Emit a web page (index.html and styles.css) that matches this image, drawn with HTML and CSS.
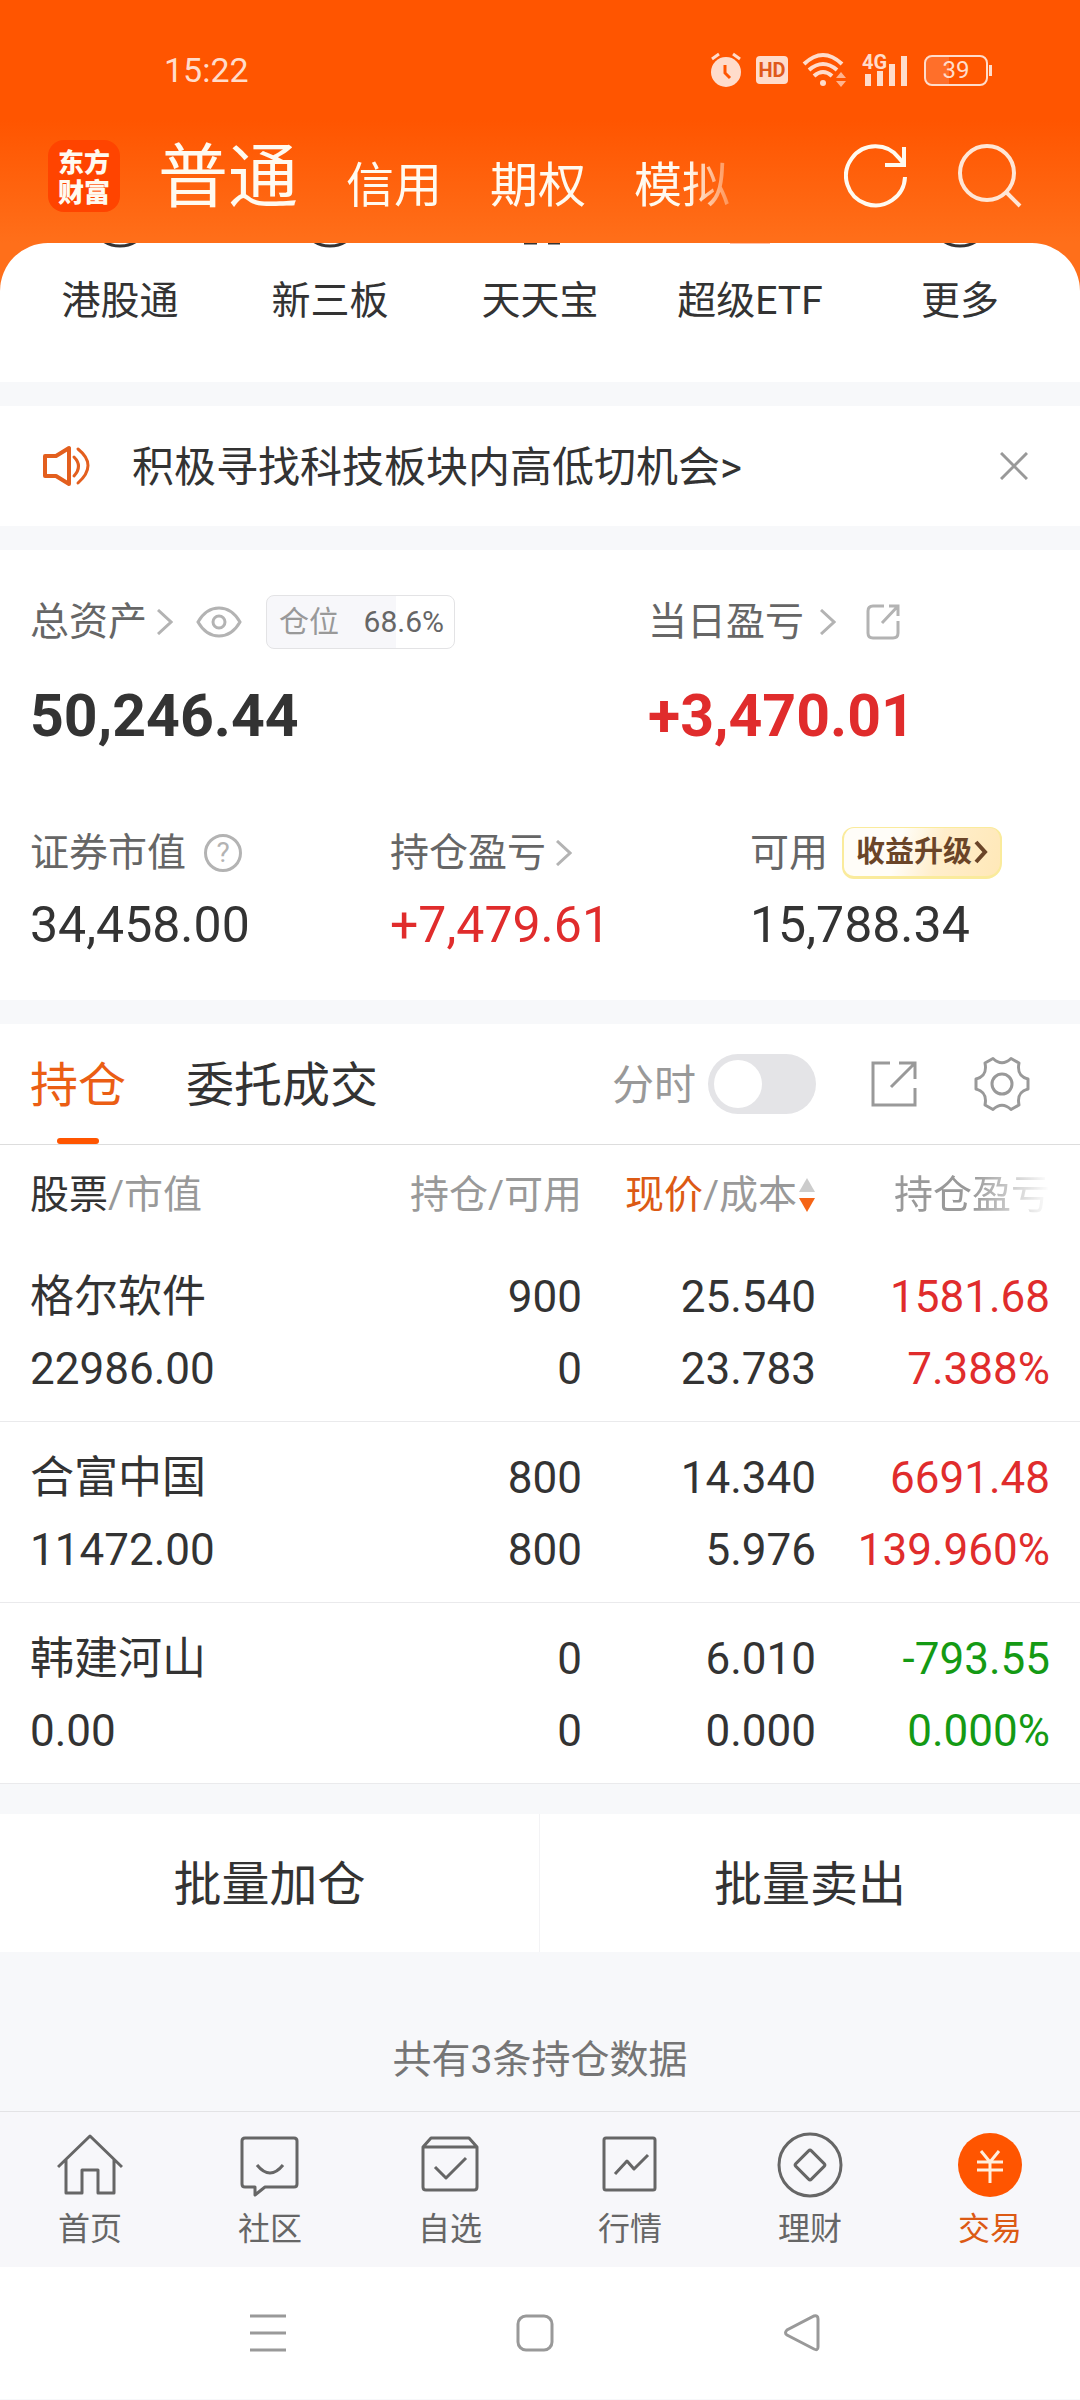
FILE: index.html
```html
<!DOCTYPE html>
<html lang="zh-CN">
<head>
    <meta charset="UTF-8">
    <meta name="viewport" content="width=device-width, initial-scale=1.0">
    <title>东方财富 - 交易</title>
    <link rel="stylesheet" href="styles.css">
</head>
<body>
    <div class="top">
        <div class="status-bar">
            <span class="clock">15:22</span>
            <div class="status-icons">
                <svg class="alarm" width="32" height="36" viewBox="0 0 32 36">
                    <circle cx="16" cy="20" r="15" fill="currentColor"/>
                    <path d="M2 7L9 2M30 7L23 2" fill="none" stroke="currentColor" stroke-width="3"/>
                    <path d="M15 13V21L20 26" fill="none" stroke="#ff5500" stroke-width="3"/>
                </svg>
                <span class="hd">HD</span>
                <svg class="wifi" width="46" height="36" viewBox="0 0 46 36">
                    <path d="M2 12Q21 -6 40 12M7 18Q21 6 35 18M12 24Q21 16 30 24" fill="none" stroke="currentColor" stroke-width="4"/>
                    <circle cx="21" cy="31" r="3" fill="currentColor"/>
                    <path d="M34 26L39 20L44 26ZM34 29L39 35L44 29Z" fill="currentColor" opacity=".7"/>
                </svg>
                <svg class="signal" width="48" height="44" viewBox="0 -4 48 44">
                    <text x="0" y="17" font-size="20" font-weight="700" fill="currentColor">4G</text>
                    <path d="M6 22V34M18 19V34M30 12V34M42 4V34" fill="none" stroke="currentColor" stroke-width="6"/>
                </svg>
                <span class="battery">39</span>
            </div>
        </div>

        <header class="title-bar">
            <a class="logo" href="#">东方<br>财富</a>
            <nav class="account-tabs">
                <button class="account-tab active" type="button">普通</button>
                <button class="account-tab" type="button">信用</button>
                <button class="account-tab" type="button">期权</button>
                <button class="account-tab" type="button">模拟</button>
            </nav>
            <button class="icon-btn refresh" type="button" aria-label="刷新">
                <svg width="64" height="64" viewBox="0 0 64 64" fill="none" stroke="currentColor" stroke-width="4">
                    <path d="M61 33A29.500 29.500 0 1 1 55 14L60 20"/>
                    <path d="M60 3V21H41"/>
                </svg>
            </button>
            <button class="icon-btn search" type="button" aria-label="搜索">
                <svg width="64" height="64" viewBox="0 0 64 64" fill="none" stroke="currentColor" stroke-width="4">
                    <circle cx="29" cy="29" r="27"/>
                    <path d="M48 48L62 62"/>
                </svg>
            </button>
        </header>

        <nav class="shortcuts">
            <a class="shortcut" href="#">
                <svg width="40" height="6" viewBox="0 0 40 6"><circle cx="20" cy="-27" r="30" fill="none" stroke="#333" stroke-width="3"/></svg>
                港股通
            </a>
            <a class="shortcut" href="#">
                <svg width="40" height="6" viewBox="0 0 40 6"><circle cx="20" cy="-27" r="30" fill="none" stroke="#333" stroke-width="3"/></svg>
                新三板
            </a>
            <a class="shortcut" href="#">
                <svg width="40" height="6" viewBox="0 0 40 6"><path d="M4 0H17M28 0H41" stroke="#333" stroke-width="3"/></svg>
                天天宝
            </a>
            <a class="shortcut" href="#">
                <svg width="40" height="6" viewBox="0 0 40 6"><path d="M0 0H40" stroke="#ff8a5c" stroke-width="1"/></svg>
                超级ETF
            </a>
            <a class="shortcut" href="#">
                <svg width="40" height="6" viewBox="0 0 40 6"><circle cx="20" cy="-27" r="30" fill="none" stroke="#333" stroke-width="3"/></svg>
                更多
            </a>
        </nav>
    </div>

    <section class="notice">
        <svg width="48" height="42" viewBox="0 0 48 42" fill="none" stroke="#e35f1e" stroke-width="4" stroke-linejoin="round" stroke-linecap="round">
            <path d="M3 11H14L27 3V39L14 31H3Z"/>
            <path d="M32 12Q41 21 32 31" stroke-width="3"/>
            <path d="M36 4Q56 20 36 38" stroke-width="3"/>
        </svg>
        <a class="notice-text" href="#">积极寻找科技板块内高低切机会&gt;</a>
        <button class="icon-btn close" type="button" aria-label="关闭">
            <svg width="28" height="28" viewBox="0 0 28 28" fill="none" stroke="currentColor" stroke-width="3"><path d="M1 1L27 27M27 1L1 27"/></svg>
        </button>
    </section>

    <section class="assets">
        <div class="asset-row main-row">
            <div class="asset">
                <div class="asset-label">
                    总资产
                    <svg class="chevron" width="16" height="26" viewBox="0 0 16 26"><path d="M1 1L14 13L1 25"/></svg>
                    <svg class="eye" width="46" height="32" viewBox="0 0 46 32" fill="none" stroke="#b3b3b3" stroke-width="3">
                        <path d="M2 16Q10 2 23 2T44 16Q36 30 23 30T2 16Z"/>
                        <circle cx="23" cy="16" r="6"/>
                    </svg>
                    <span class="position"><span>仓位</span><b>68.6%</b></span>
                </div>
                <div class="asset-value big">50,246.44</div>
            </div>
            <div class="asset">
                <div class="asset-label">
                    当日盈亏
                    <svg class="chevron wide" width="16" height="26" viewBox="0 0 16 26"><path d="M1 1L14 13L1 25"/></svg>
                    <svg class="share-small" width="34" height="36" viewBox="0 0 34 36" fill="none" stroke="#b3b3b3" stroke-width="3">
                        <path d="M18 2H7Q2 2 2 7V29Q2 34 7 34H27Q32 34 32 29V17"/>
                        <path d="M23 2H32V12M32 2L16 19"/>
                    </svg>
                </div>
                <div class="asset-value big up">+3,470.01</div>
            </div>
        </div>
        <div class="asset-row">
            <div class="asset">
                <div class="asset-label">
                    证券市值
                    <span class="help">?</span>
                </div>
                <div class="asset-value">34,458.00</div>
            </div>
            <div class="asset">
                <div class="asset-label">
                    持仓盈亏
                    <svg class="chevron" width="16" height="26" viewBox="0 0 16 26"><path d="M1 1L14 13L1 25"/></svg>
                </div>
                <div class="asset-value up">+7,479.61</div>
            </div>
            <div class="asset">
                <div class="asset-label">
                    可用
                    <a class="upgrade" href="#">收益升级<svg width="14" height="24" viewBox="0 0 14 24" fill="none" stroke="currentColor" stroke-width="4"><path d="M2 2L11 12L2 22"/></svg></a>
                </div>
                <div class="asset-value">15,788.34</div>
            </div>
        </div>
    </section>

    <section class="holdings">
        <div class="holdings-bar">
            <button class="holdings-tab active" type="button">持仓</button>
            <button class="holdings-tab" type="button">委托成交</button>
            <div class="tools">
                <label for="timeShare">分时</label>
                <input class="switch" type="checkbox" id="timeShare">
                <button class="icon-btn share" type="button" aria-label="分享">
                    <svg width="46" height="46" viewBox="0 0 46 46" fill="none" stroke="currentColor" stroke-width="3">
                        <path d="M19 2H2V44H44V27"/>
                        <path d="M28 2H44V18M44 2L20 26"/>
                    </svg>
                </button>
                <button class="icon-btn gear" type="button" aria-label="设置">
                    <svg width="56" height="56" viewBox="-28 -28 56 56" fill="none" stroke="currentColor" stroke-width="3" stroke-linejoin="round">
                        <path d="M-9 -25.500Q0 -17 9 -25.500L17 -21C15 -11 19 -7 26 -5L26 5C19 7 15 11 17 21L9 25.500Q0 17 -9 25.500L-17 21C-15 11 -19 7 -26 5L-26 -5C-19 -7 -15 -11 -17 -21Z"/>
                        <circle r="10"/>
                    </svg>
                </button>
            </div>
        </div>

        <table class="stocks">
            <colgroup>
                <col>
                <col class="col-count">
                <col class="col-price">
                <col class="col-profit">
            </colgroup>
            <thead>
                <tr>
                    <th><span class="dark">股票</span>/市值</th>
                    <th>持仓/可用</th>
                    <th><span class="sorted">现价</span>/成本<svg class="sort" width="18" height="36" viewBox="0 0 18 36"><path d="M9 1L17 15H1Z" fill="#ccc"/><path d="M9 35L17 21H1Z" fill="#f56415"/></svg></th>
                    <th><span class="fade">持仓盈亏</span></th>
                </tr>
            </thead>
            <tbody>
                <tr>
                    <td>格尔软件<br>22986.00</td>
                    <td>900<br>0</td>
                    <td>25.540<br>23.783</td>
                    <td class="up">1581.68<br>7.388%</td>
                </tr>
                <tr>
                    <td>合富中国<br>11472.00</td>
                    <td>800<br>800</td>
                    <td>14.340<br>5.976</td>
                    <td class="up">6691.48<br>139.960%</td>
                </tr>
                <tr>
                    <td>韩建河山<br>0.00</td>
                    <td>0<br>0</td>
                    <td>6.010<br>0.000</td>
                    <td class="down">-793.55<br>0.000%</td>
                </tr>
            </tbody>
        </table>
    </section>

    <div class="batch">
        <button type="button">批量加仓</button>
        <button type="button">批量卖出</button>
    </div>

    <p class="summary">共有3条持仓数据</p>

    <nav class="tab-bar">
        <a href="#">
            <svg width="66" height="66" viewBox="0 0 66 66">
                <path d="M1 35L33 4L65 35M9 28V61H25V38H41V61H57V28"/>
            </svg>
            首页
        </a>
        <a href="#">
            <svg width="66" height="66" viewBox="0 0 66 66">
                <path d="M8 6H57Q60 6 60 9V52Q60 55 57 55H28L18 63V55H8Q5 55 5 52V9Q5 6 8 6Z"/>
                <path d="M20 33Q33 49 46 33"/>
            </svg>
            社区
        </a>
        <a href="#">
            <svg width="66" height="66" viewBox="0 0 66 66">
                <path d="M6 15L14 6H52L60 15V55Q60 58 57 58H9Q6 58 6 55ZM6 15H60"/>
                <path d="M18 35L29 46L49 26"/>
            </svg>
            自选
        </a>
        <a href="#">
            <svg width="66" height="66" viewBox="0 0 66 66">
                <rect x="7" y="6" width="51" height="52" rx="2"/>
                <path d="M18 42L30 29L37 37L51 23"/>
            </svg>
            行情
        </a>
        <a href="#">
            <svg width="66" height="66" viewBox="0 0 66 66">
                <circle cx="33" cy="33" r="31"/>
                <rect x="22" y="22" width="22" height="22" rx="2" transform="rotate(45 33 33)"/>
            </svg>
            理财
        </a>
        <a class="active" href="#">
            <svg width="66" height="66" viewBox="0 0 66 66">
                <circle class="coin" cx="33" cy="33" r="32"/>
                <path class="yuan" d="M24 19L33 30L42 19M20 30H46M20 38H46M33 30V51"/>
            </svg>
            交易
        </a>
    </nav>

    <nav class="system-nav">
        <button class="icon-btn" type="button" aria-label="菜单">
            <svg width="38" height="38" viewBox="0 0 38 38"><path d="M1 2H37M1 19H37M1 36H37"/></svg>
        </button>
        <button class="icon-btn" type="button" aria-label="主页">
            <svg width="38" height="38" viewBox="0 0 38 38"><rect x="2" y="2" width="34" height="34" rx="8"/></svg>
        </button>
        <button class="icon-btn" type="button" aria-label="返回">
            <svg width="38" height="38" viewBox="0 0 38 38"><path d="M31 2Q35 1 35 5V33Q35 37 31 35L4 21Q1 19 4 16Z"/></svg>
        </button>
    </nav>
</body>
</html>
```
FILE: styles.css
```css
:root {
    --orange: #ff5500;
    --text: #333;
    --label: #666;
    --muted: #999;
    --red: #e02c2c;
    --green: #149a14;
    --gap-color: #f7f8fa;
}

* {
    box-sizing: border-box;
}

body {
    margin: 0;
    font-family: Roboto, "Noto Sans CJK SC", sans-serif;
    font-size: 39px;
    line-height: 48px;
    color: var(--text);
    background: var(--gap-color);
}

a {
    color: inherit;
    text-decoration: none;
}

button {
    margin: 0;
    padding: 0;
    border: none;
    background: none;
    color: inherit;
    font: inherit;
    cursor: pointer;
}

svg {
    display: block;
    flex: none;
}

.icon-btn {
    display: flex;
}

.up {
    color: var(--red);
}

.down {
    color: var(--green);
}

/* header */
.top {
    background: linear-gradient(to bottom, #ff5500 120px, #ff6f1a 243px);
}

.status-bar {
    display: flex;
    align-items: center;
    justify-content: space-between;
    height: 140px;
    padding: 0 88px 0 164px;
    color: #ffdccb;
}

.clock {
    font-size: 34px;
}

.status-icons {
    display: flex;
    align-items: center;
    gap: 14px;
}

.hd {
    width: 32px;
    border-radius: 4px;
    background: currentColor;
    font-size: 20px;
    font-weight: 700;
    line-height: 28px;
    text-align: center;
}

.hd::first-line {
    color: #e0591a;
}

.battery {
    position: relative;
    width: 64px;
    margin-right: 4px;
    border: 2px solid currentColor;
    border-radius: 8px;
    background: linear-gradient(to right, #ff6f2a 39%, transparent 39%);
    font-size: 24px;
    line-height: 27px;
    text-align: center;
}

.battery::after {
    content: "";
    position: absolute;
    top: 8px;
    right: -6px;
    width: 3px;
    height: 11px;
    background: currentColor;
}

.title-bar {
    display: flex;
    align-items: center;
    height: 103px;
    padding: 0 58px 32px 48px;
    color: #fffaf0;
}

.logo {
    width: 72px;
    height: 72px;
    padding-top: 6px;
    border-radius: 16px;
    background: #ff4400;
    font-family: "Noto Sans CJK SC", sans-serif;
    font-size: 26px;
    font-weight: 900;
    line-height: 30px;
    text-align: center;
}

.account-tabs {
    display: flex;
    flex: 1;
    align-items: baseline;
    gap: 48px;
    margin-left: 38px;
    padding-top: 12px;
    -webkit-mask-image: linear-gradient(to right, #000 530px, transparent 590px);
    mask-image: linear-gradient(to right, #000 530px, transparent 590px);
}

.account-tab {
    font-size: 48px;
    line-height: 72px;
}

.account-tab.active {
    font-size: 70px;
}

.search {
    margin-left: 50px;
    color: #ffe6d5;
}

.shortcuts {
    display: grid;
    grid-template-columns: repeat(5, 1fr);
    height: 139px;
    padding: 0 15px;
    border-radius: 48px 48px 0 0;
    background: white;
}

.shortcut {
    display: flex;
    flex-direction: column;
    align-items: center;
    gap: 28px;
}

/* notice */
.notice {
    display: flex;
    align-items: center;
    height: 120px;
    margin: 24px 0;
    padding: 0 52px 0 42px;
    background: white;
}

.notice-text {
    flex: 1;
    margin-left: 42px;
    padding-top: 4px;
    font-size: 42px;
}

.close {
    color: var(--muted);
}

/* assets */
.assets {
    padding: 43px 0 32px;
    background: white;
}

.asset-row {
    display: grid;
    grid-template-columns: repeat(3, 1fr);
}

.asset-row.main-row {
    grid-template-columns: 3fr 2fr;
    margin-bottom: 43px;
}

.asset {
    padding-left: 30px;
}

.main-row .asset + .asset {
    padding-left: 0;
}

.asset-label {
    display: flex;
    align-items: center;
    height: 58px;
    color: var(--label);
}

.asset-value {
    font-size: 50px;
    line-height: 86px;
}

.asset-value.big {
    font-size: 59px;
    font-weight: 700;
    line-height: 130px;
}

.chevron {
    margin-left: 10px;
    fill: none;
    stroke: #b3b3b3;
    stroke-width: 3;
}

.chevron.wide {
    margin-left: 16px;
}

.eye {
    margin-left: 23px;
}

.share-small {
    margin-left: 30px;
}

.position {
    display: flex;
    justify-content: space-between;
    width: 189px;
    margin-left: 24px;
    padding: 0 10px 0 12px;
    border: 1px solid #e3e3e5;
    border-radius: 8px;
    background: linear-gradient(to right, #f7f7fa 69%, white 69%);
    color: var(--muted);
    font-size: 30px;
    line-height: 52px;
}

.position b {
    color: var(--label);
    font-weight: 400;
}

.help {
    width: 38px;
    margin-left: 18px;
    border: 3px solid #b3b3b3;
    border-radius: 50%;
    color: #b3b3b3;
    font-size: 28px;
    line-height: 32px;
    text-align: center;
}

.upgrade {
    display: flex;
    align-items: center;
    gap: 2px;
    margin-left: 14px;
    padding: 0 12px;
    border: solid #faeb9c;
    border-width: 1px 2px 3px;
    border-radius: 12px 12px 16px 12px;
    background: linear-gradient(105deg, #fffdf8 35%, #ffeecb 60%, #ffe8b8);
    color: #6b4528;
    font-size: 29px;
    font-weight: 700;
}

/* holdings */
.holdings {
    margin-top: 24px;
    background: white;
}

.holdings-bar {
    display: flex;
    height: 121px;
    padding: 0 50px 0 30px;
    border-bottom: 1px solid #ddd;
}

.holdings-tab {
    display: flex;
    flex-direction: column;
    align-items: center;
    margin-right: 60px;
    padding-top: 2px;
    font-size: 48px;
    line-height: 120px;
}

.holdings-tab.active {
    color: #eb5e14;
}

.holdings-tab.active::after {
    content: "";
    width: 42px;
    height: 6px;
    margin-top: -8px;
    border-radius: 3px;
    background: var(--orange);
}

.tools {
    display: flex;
    align-items: center;
    margin-left: auto;
    color: var(--muted);
    font-size: 42px;
}

.tools label {
    padding-top: 4px;
}

.switch {
    appearance: none;
    width: 108px;
    height: 60px;
    margin: 0 0 0 12px;
    padding: 6px;
    border-radius: 30px;
    background: #e4e4e7;
    cursor: pointer;
}

.switch::before {
    content: "";
    display: block;
    width: 48px;
    height: 48px;
    border-radius: 50%;
    background: white;
}

.switch:checked {
    background: var(--orange);
}

.switch:checked::before {
    margin-left: auto;
}

.share {
    margin-left: 55px;
}

.gear {
    margin-left: 57px;
}

.stocks {
    width: 100%;
    border-collapse: collapse;
    table-layout: fixed;
    text-align: right;
}

.col-count {
    width: 202px;
}

.col-price {
    width: 234px;
}

.col-profit {
    width: 264px;
}

.stocks th {
    height: 96px;
    padding: 4px 0 0;
    color: var(--muted);
    font-weight: 400;
    white-space: nowrap;
}

.stocks td {
    padding: 20px 0 16px;
    border-bottom: 1px solid #eaeaec;
    font-size: 44px;
    line-height: 72px;
}

.stocks th:first-child,
.stocks td:first-child {
    padding-left: 30px;
    text-align: left;
}

.stocks th:last-child,
.stocks td:last-child {
    padding-right: 30px;
}

.dark {
    color: var(--text);
}

.sorted {
    color: #dc5a14;
}

.sort {
    display: inline-block;
    margin-left: 1px;
    vertical-align: -5px;
}

.fade {
    -webkit-mask-image: linear-gradient(to right, #000 50%, transparent);
    mask-image: linear-gradient(to right, #000 50%, transparent);
}

/* batch buttons */
.batch {
    display: grid;
    grid-template-columns: 1fr 1fr;
    margin-top: 30px;
    background: white;
}

.batch button {
    height: 138px;
    padding-top: 4px;
    font-size: 48px;
}

.batch button:first-child {
    border-right: 1px solid #f3f3f5;
}

.summary {
    margin: 0;
    padding: 84px 0 27px;
    color: #757575;
    text-align: center;
}

/* bottom bar */
.tab-bar {
    display: grid;
    grid-template-columns: repeat(6, 1fr);
    height: 156px;
    padding-top: 20px;
    border-top: 1px solid #e3e3e5;
    background: #f7f7fa;
    color: var(--label);
    font-size: 32px;
}

.tab-bar a {
    display: flex;
    flex-direction: column;
    align-items: center;
    gap: 7px;
}

.tab-bar svg {
    fill: none;
    stroke: #666;
    stroke-width: 3;
    stroke-linejoin: round;
}

.tab-bar .active {
    color: #dc5a14;
}

.tab-bar .coin {
    fill: var(--orange);
    stroke: none;
}

.tab-bar .yuan {
    stroke: #ffeedd;
}

.system-nav {
    display: grid;
    grid-template-columns: repeat(3, 1fr);
    justify-items: center;
    align-items: center;
    height: 132px;
    padding: 0 145px 0 134px;
    background: white;
}

.system-nav svg {
    fill: none;
    stroke: var(--muted);
    stroke-width: 3;
}
```
